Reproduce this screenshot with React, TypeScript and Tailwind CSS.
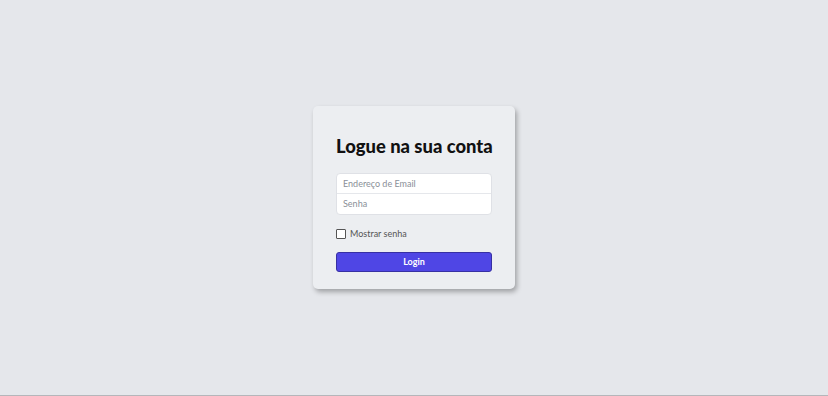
import React from "react";

export default function App() {
  return (
    <div className="h-[396px] w-full bg-[#e5e7eb] flex flex-col" style={{ fontFamily: "Lato, 'Open Sans', sans-serif" }}>
      <div className="flex-1 flex items-start justify-center pt-[106px]">
        <div className="w-[202px] h-[183px] bg-[#eceef1] rounded-[5px] shadow-[2px_3px_5px_rgba(0,0,0,0.3)] px-[23px] pt-[30px]">
          <h1 className="text-[18.4px] font-black text-[#111] leading-[20px] whitespace-nowrap">Logue na sua conta</h1>
          <div className="mt-[17px] bg-white rounded-[4px] border border-[#dfe1e6]">
            <div className="h-[20px] px-[6px] flex items-center text-[9px] text-[#8a8f98] border-b border-[#e5e7eb]">Endereço de Email</div>
            <div className="h-[20px] px-[6px] flex items-center text-[9px] text-[#8a8f98]">Senha</div>
          </div>
          <div className="mt-[12px] flex items-center gap-[4px]">
            <div className="w-[10px] h-[10px] border border-[#555] rounded-[1px] bg-white"></div>
            <span className="text-[9px] text-[#555]">Mostrar senha</span>
          </div>
          <button className="mt-[11px] w-full h-[20px] bg-[#4f46e5] rounded-[3px] border border-[#3730a3] text-white text-[9px] font-bold flex items-center justify-center">Login</button>
        </div>
      </div>
      <div className="h-[1px] bg-[#b5b6ba]"></div>
    </div>
  );
}
